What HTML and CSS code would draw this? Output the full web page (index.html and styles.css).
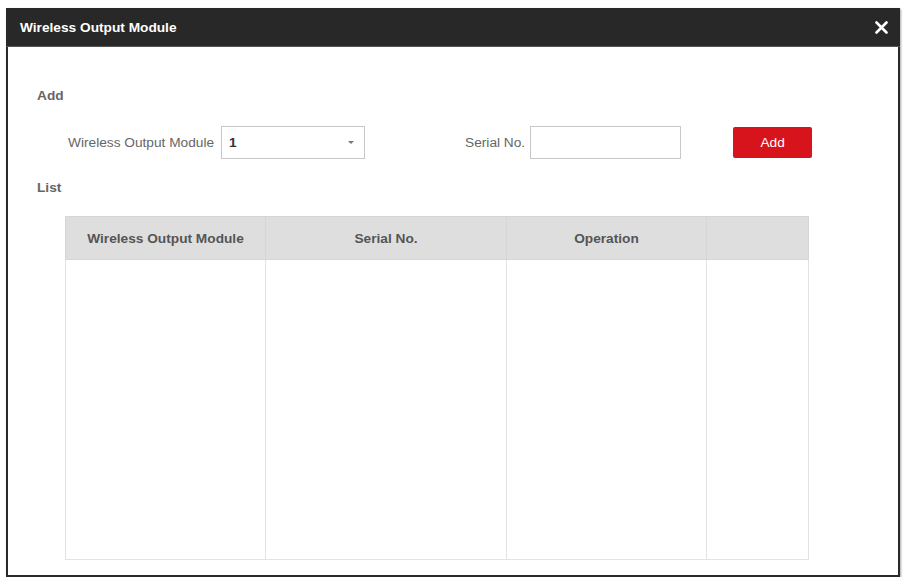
FILE: index.html
```html
<!DOCTYPE html>
<html lang="en">
<head>
    <meta charset="UTF-8">
    <meta name="viewport" content="width=device-width, initial-scale=1.0">
    <title>Wireless Output Module</title>
    <link rel="stylesheet" href="styles.css">
</head>
<body>
    <div class="dialog">
        <div class="dialog-header">
            <span class="dialog-title">Wireless Output Module</span>
            <button class="close-button" aria-label="Close">
                <svg width="13" height="13" viewBox="0 0 13 13">
                    <path d="M1.5 1.5 L11.5 11.5 M11.5 1.5 L1.5 11.5" stroke="#fff" stroke-width="2.6" stroke-linecap="round"/>
                </svg>
            </button>
        </div>
        <div class="dialog-body">
            <div class="section-title">Add</div>
            <div class="form-row">
                <label class="field-label">Wireless Output Module</label>
                <div class="select-box">
                    <span class="select-value">1</span>
                    <span class="caret"></span>
                </div>
                <label class="field-label serial-label">Serial No.</label>
                <input class="text-input" type="text">
                <button class="add-button">Add</button>
            </div>
            <div class="section-title list-title">List</div>
            <table class="list-table">
                <thead>
                    <tr>
                        <th class="col-module">Wireless Output Module</th>
                        <th class="col-serial">Serial No.</th>
                        <th class="col-operation">Operation</th>
                        <th class="col-extra"></th>
                    </tr>
                </thead>
                <tbody>
                    <tr>
                        <td></td>
                        <td></td>
                        <td></td>
                        <td></td>
                    </tr>
                </tbody>
            </table>
        </div>
    </div>
</body>
</html>
```

FILE: styles.css
```css
body {
    margin: 0;
    background: #fff;
    font-family: "Liberation Sans", Arial, sans-serif;
    font-size: 13.7px;
}
.dialog {
    margin: 8px 6px 0 6px;
    height: 567px;
    border: 2px solid #2a2a2a;
    border-top: none;
    box-shadow: 1px 1px 2px rgba(0, 0, 0, 0.35);
    background: #fff;
    display: flex;
    flex-direction: column;
}
.dialog-header {
    height: 39px;
    flex-shrink: 0;
    background: #282828;
    display: flex;
    align-items: center;
    justify-content: space-between;
    padding: 0 12px 0 14px;
    margin: 0 -2px;
    border-bottom: 1px solid #555;
    box-sizing: border-box;
}
.dialog-title {
    color: #fff;
    font-weight: bold;
    font-size: 13.7px;
}
.close-button {
    background: none;
    border: none;
    padding: 0;
    display: flex;
    cursor: pointer;
}
.dialog-body {
    padding: 41px 0 0 29px;
}
.section-title {
    color: #666;
    font-weight: bold;
    font-size: 13.7px;
    line-height: 16px;
}
.form-row {
    display: flex;
    align-items: center;
    height: 33px;
    margin-top: 22px;
    padding-left: 31px;
}
.field-label {
    color: #666;
    font-size: 13.7px;
}
.select-box {
    width: 144px;
    height: 33px;
    box-sizing: border-box;
    border: 1px solid #c8c8c8;
    margin-left: 7px;
    display: flex;
    align-items: center;
    justify-content: space-between;
    padding: 0 10px 0 7px;
}
.select-value {
    color: #333;
    font-weight: bold;
    font-size: 13.7px;
}
.caret {
    width: 0;
    height: 0;
    border-left: 3px solid transparent;
    border-right: 3px solid transparent;
    border-top: 3px solid #777;
}
.serial-label {
    margin-left: 100px;
}
.text-input {
    width: 151px;
    height: 33px;
    box-sizing: border-box;
    border: 1px solid #c8c8c8;
    margin-left: 5px;
    padding: 0 6px;
    outline: none;
}
.add-button {
    width: 79px;
    height: 31px;
    margin-left: 52px;
    background: #d7131c;
    color: #fff;
    border: none;
    border-radius: 2px;
    font-family: inherit;
    font-size: 13.7px;
    cursor: pointer;
}
.list-title {
    margin-top: 21px;
}
.list-table {
    margin: 20px 0 0 28px;
    border-collapse: collapse;
    table-layout: fixed;
}
.list-table th,
.list-table td {
    border: 1px solid #e3e3e3;
    padding: 0;
}
.list-table th {
    height: 42px;
    background: #dedede;
    color: #555;
    font-weight: bold;
    font-size: 13.7px;
    text-align: center;
    border-color: #d6d6d6;
}
.list-table td {
    height: 299px;
}
.col-module {
    width: 199px;
}
.col-serial {
    width: 240px;
}
.col-operation {
    width: 199px;
}
.col-extra {
    width: 101px;
}
```
